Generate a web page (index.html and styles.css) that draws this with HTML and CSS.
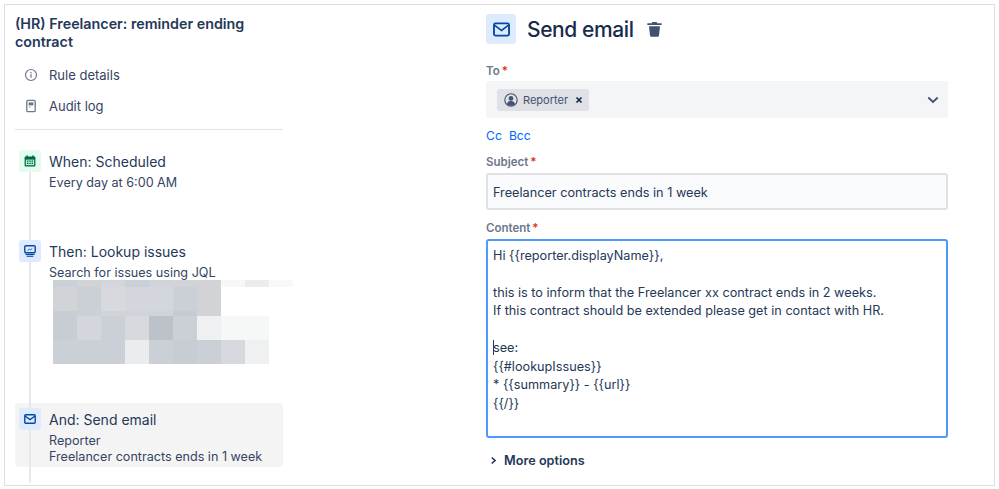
FILE: index.html
```html
<!DOCTYPE html>
<html lang="en">
<head>
<meta charset="utf-8">
<title>Send email</title>
<link rel="stylesheet" href="styles.css">
</head>
<body>
<div class="frame">
  <aside class="side">
    <h2 class="rule-title">(HR) Freelancer: reminder ending contract</h2>
    <nav class="nav">
      <div class="nav-row">
        <svg class="nav-icon" viewBox="0 0 14 14"><circle cx="7" cy="7" r="5.5" fill="none" stroke="#6b778c" stroke-width="1.2"/><rect x="6.4" y="6.2" width="1.2" height="3.6" fill="#6b778c"/><rect x="6.4" y="4" width="1.2" height="1.3" fill="#6b778c"/></svg>
        <span>Rule details</span>
      </div>
      <div class="nav-row">
        <svg class="nav-icon" viewBox="0 0 14 14"><rect x="2.8" y="1.3" width="8.4" height="11.4" rx="1.2" fill="none" stroke="#6b778c" stroke-width="1.3"/><rect x="4.6" y="3.4" width="4.8" height="3" fill="#6b778c"/><rect x="4.6" y="7.6" width="2.4" height="1" fill="#a5adba"/></svg>
        <span>Audit log</span>
      </div>
    </nav>
    <hr class="divider">
    <div class="timeline">
      <div class="step">
        <div class="tile tile-green">
          <svg viewBox="0 0 12 12" width="12" height="12"><rect x="0.6" y="1.6" width="10.8" height="9.8" rx="1" fill="#006644"/><rect x="2.4" y="0.4" width="1.4" height="2.4" fill="#006644"/><rect x="8.2" y="0.4" width="1.4" height="2.4" fill="#006644"/><rect x="1.8" y="4.6" width="8.4" height="5.6" fill="#abf5d1"/><path d="M3 5.6h1.4v1.2H3zM5.3 5.6h1.4v1.2H5.3zM7.6 5.6H9v1.2H7.6zM3 7.8h1.4V9H3zM5.3 7.8h1.4V9H5.3zM7.6 7.8H9V9H7.6z" fill="#006644"/></svg>
        </div>
        <div class="step-body">
          <div class="step-title">When: Scheduled</div>
          <div class="step-sub">Every day at 6:00 AM</div>
        </div>
      </div>
      <div class="step step-lookup">
        <div class="tile tile-blue">
          <svg viewBox="0 0 12 12" width="12" height="12"><rect x="0.8" y="0.8" width="10.4" height="7" rx="1" fill="none" stroke="#0747a6" stroke-width="1.4"/><path d="M3.6 5.4l1.8-1.2 1 .7 1.8-1.4" fill="none" stroke="#0747a6" stroke-width="0.9"/><rect x="1.5" y="8.9" width="9" height="1.1" fill="#0747a6"/><rect x="2.6" y="10.7" width="6.8" height="1.1" fill="#0747a6"/></svg>
        </div>
        <div class="step-body">
          <div class="step-title">Then: Lookup issues</div>
          <div class="step-sub">Search for issues using JQL</div>
          <div class="mosaic">
            <i class="s5"></i><i class="s3"></i><i class="s2"></i><i class="s5"></i><i class="s4"></i><i class="s4"></i><i class="s3"></i><i class="w2"></i><i class="w4"></i><i class="w1"></i>
            <i class="s3"></i><i class="s5"></i><i class="s1"></i><i class="s2"></i><i class="s2"></i><i class="s5"></i><i class="s3"></i><i class="w0"></i><i class="w0"></i><i class="w0"></i>
            <i class="s6"></i><i class="s5"></i><i class="s4"></i><i class="s4"></i><i class="s4"></i><i class="s7"></i><i class="s3"></i><i class="w0"></i><i class="w0"></i><i class="w0"></i>
            <i class="s6"></i><i class="s2"></i><i class="s5"></i><i class="s1"></i><i class="s8"></i><i class="s5"></i><i class="w3"></i><i class="w2"></i><i class="w2"></i><i class="w0"></i>
            <i class="s5"></i><i class="s5"></i><i class="s5"></i><i class="w4"></i><i class="s5"></i><i class="s6"></i><i class="s5"></i><i class="s1"></i><i class="w3"></i><i class="w0"></i>
          </div>
        </div>
      </div>
      <div class="step step-active">
        <div class="tile tile-blue">
          <svg viewBox="0 0 12 12" width="12" height="12"><rect x="0.8" y="1.8" width="10.4" height="8.4" rx="1" fill="none" stroke="#0747a6" stroke-width="1.4"/><path d="M1 3l5 3.6L11 3" fill="none" stroke="#0747a6" stroke-width="1.3"/></svg>
        </div>
        <div class="step-body">
          <div class="step-title">And: Send email</div>
          <div class="step-sub">Reporter</div>
          <div class="step-sub">Freelancer contracts ends in 1 week</div>
        </div>
      </div>
    </div>
  </aside>
  <main class="panel">
    <header class="panel-head">
      <div class="panel-tile">
        <svg viewBox="0 0 18 16" width="17" height="15"><rect x="1" y="1.5" width="16" height="13" rx="1.6" fill="none" stroke="#0747a6" stroke-width="2"/><path d="M1.4 3.4L9 9l7.6-5.6" fill="none" stroke="#0747a6" stroke-width="1.8"/></svg>
      </div>
      <h1 class="panel-title">Send email</h1>
      <svg class="trash" viewBox="0 0 15 16" width="15" height="16"><path d="M5.4 1h4.2l.6 1.2H14a.8.8 0 0 1 0 1.8H1a.8.8 0 0 1 0-1.800h3.800z" fill="#42526e"/><path d="M2 5.200h11l-1 9.300a1.400 1.400 0 0 1-1.400 1.200H4.400A1.400 1.400 0 0 1 3 14.500z" fill="#42526e"/></svg>
    </header>

    <label class="label label-to">To<span class="req">*</span></label>
    <div class="select">
      <span class="chip">
        <svg viewBox="0 0 14 14" width="14" height="14"><circle cx="7" cy="7" r="6.200" fill="none" stroke="#42526e" stroke-width="1.100"/><circle cx="7" cy="5.400" r="2.300" fill="#42526e"/><path d="M3 11.200c.5-2.300 2-3.200 4-3.200s3.500.9 4 3.200A6 6 0 0 1 3 11.200z" fill="#42526e"/></svg>
        <span class="chip-text">Reporter</span>
        <svg class="chip-x" viewBox="0 0 8 8" width="8" height="8"><path d="M1.500 1.500l5 5M6.500 1.500l-5 5" stroke="#172b4d" stroke-width="1.700" fill="none"/></svg>
      </span>
      <svg class="caret-down" viewBox="0 0 12 8" width="12" height="8"><path d="M1.300 1.500L6 6l4.700-4.500" fill="none" stroke="#42526e" stroke-width="1.800"/></svg>
    </div>

    <div class="links"><a class="link">Cc</a><a class="link">Bcc</a></div>

    <label class="label label-subject">Subject<span class="req">*</span></label>
    <div class="input">Freelancer contracts ends in 1 week</div>

    <label class="label label-content">Content<span class="req">*</span></label>
    <div class="textarea">Hi {{reporter.displayName}},

this is to inform that the Freelancer xx contract ends in 2 weeks.
If this contract should be extended please get in contact with HR.

<span class="cursor"></span>see:
{{#lookupIssues}}
* {{summary}} - {{url}}
{{/}}</div>

    <div class="more">
      <svg viewBox="0 0 8 10" width="7" height="9"><path d="M2 1.500L5.800 5 2 8.500" fill="none" stroke="#172b4d" stroke-width="1.700"/></svg>
      <span>More options</span>
    </div>
  </main>
</div>
</body>
</html>
```

FILE: styles.css
```css
* { box-sizing: border-box; }

html, body {
  margin: 0;
  padding: 0;
  background: #fff;
}

body {
  font-family: Inter, "Liberation Sans", sans-serif;
  color: #253858;
  overflow: hidden;
}

.frame {
  display: flex;
  gap: 203px;
  width: 991px;
  height: 482px;
  margin: 4px 0 0 4px;
  padding-left: 10px;
  border: 1px solid #dfdfdf;
  background: #fff;
}

/* Left column */
.side {
  width: 268px;
  flex: none;
  padding-top: 10px;
}

.rule-title {
  margin: 0;
  font-size: 14.300px;
  line-height: 18px;
  font-weight: 600;
  color: #253858;
}

.nav { margin-top: 8px; }

.nav-row {
  display: flex;
  align-items: center;
  height: 31px;
  padding-left: 9px;
  font-size: 13px;
  color: #344563;
}

.nav-icon {
  width: 14px;
  height: 14px;
  margin-right: 11px;
  flex: none;
}

.divider {
  height: 1px;
  margin: 8px 0 20px;
  border: 0;
  background: #e1e4ea;
}

.timeline {
  position: relative;
  padding-bottom: 16px;
}

.timeline::before {
  content: "";
  position: absolute;
  left: 14px;
  top: 16px;
  bottom: 0;
  width: 2px;
  background: #e6e8f0;
}

.step {
  display: flex;
  gap: 8px;
  padding-left: 4px;
}

.step-lookup { margin-top: 49px; }

.step-active {
  margin-top: 39px;
  padding-top: 5px;
  padding-bottom: 2px;
  border-radius: 4px;
  background: #f4f4f5;
}

.tile {
  position: relative;
  display: flex;
  align-items: center;
  justify-content: center;
  width: 22px;
  height: 22px;
  flex: none;
  border-radius: 3px;
}

.tile-green { background: #e3fcef; }
.tile-blue { background: #deebff; }

.step-title {
  margin-bottom: 1px;
  font-size: 14px;
  line-height: 24px;
  color: #253858;
}

.step-sub {
  font-size: 12.600px;
  line-height: 16px;
  color: #344563;
  white-space: nowrap;
}

.mosaic {
  display: grid;
  grid-template-columns: repeat(10, 24px);
  grid-template-rows: 7px 24px 5px 24px 24px;
  margin: -1px 0 0 4px;
  width: 240px;
}

.s1 { background: #d7d9de; }
.s2 { background: #d3d6dc; }
.s3 { background: #d1d3d7; }
.s4 { background: #d0d3d8; }
.s5 { background: #cbcfd6; }
.s6 { background: #c8cdd4; }
.s7 { background: #c6cad3; }
.s8 { background: #bdc1c9; }
.w0 { background: #fff; }
.w1 { background: #f8f8f8; }
.w2 { background: #f6f7f7; }
.w3 { background: #eff0f2; }
.w4 { background: #ebecee; }

/* Right column */
.panel {
  width: 462px;
  flex: none;
  padding-top: 9px;
}

.panel-head {
  display: flex;
  align-items: center;
  height: 30px;
}

.panel-tile {
  display: flex;
  align-items: center;
  justify-content: center;
  width: 30px;
  height: 30px;
  margin-right: 11px;
  border-radius: 3px;
  background: #deebff;
}

.panel-title {
  margin: 0 13px 0 0;
  padding-top: 1px;
  font-size: 21px;
  letter-spacing: -0.4px;
  line-height: 30px;
  font-weight: 500;
  color: #172b4d;
}

.trash { margin-top: -1px; }

.label {
  display: block;
  font-size: 11.500px;
  line-height: 16px;
  font-weight: 600;
  color: #6b778c;
}

.req {
  margin-left: 2px;
  color: #de350b;
}

.label-to { margin: 19px 0 2px; }
.label-subject { margin: 10px 0 3px; }
.label-content { margin: 10px 0 3px; }

.select {
  display: flex;
  align-items: center;
  justify-content: space-between;
  height: 37px;
  padding: 0 9px 0 11px;
  border-radius: 3px;
  background: #f4f5f7;
}

.chip {
  display: flex;
  align-items: center;
  width: 92px;
  height: 22px;
  padding-left: 7px;
  border-radius: 3px;
  background: #dfe1e6;
}

.chip-text {
  margin-left: 5px;
  font-size: 11px;
  color: #42526e;
}

.chip-x { margin-left: 7px; }

.links {
  display: flex;
  gap: 7px;
  margin-top: 10px;
  font-size: 12.200px;
  line-height: 16px;
}

.link { color: #0065ff; }

.input {
  height: 37px;
  padding: 2px 0 0 5px;
  border: 2px solid #dfe1e6;
  border-radius: 3px;
  background: #fafbfc;
  font-size: 12.700px;
  line-height: 31px;
  color: #253858;
}

.textarea {
  height: 199px;
  padding: 5.600px 5px 4px;
  border: 2px solid #4c9aff;
  border-radius: 3px;
  background: #fff;
  font-size: 12.700px;
  line-height: 18.500px;
  color: #253858;
  white-space: pre-line;
}

.cursor {
  display: inline-block;
  width: 1px;
  height: 15px;
  margin-right: -1px;
  vertical-align: -3px;
  background: #253858;
}

.more {
  display: flex;
  align-items: center;
  gap: 7px;
  height: 20px;
  margin-top: 12px;
  padding-left: 4px;
  font-size: 12.700px;
  font-weight: 600;
  color: #253858;
}
```
